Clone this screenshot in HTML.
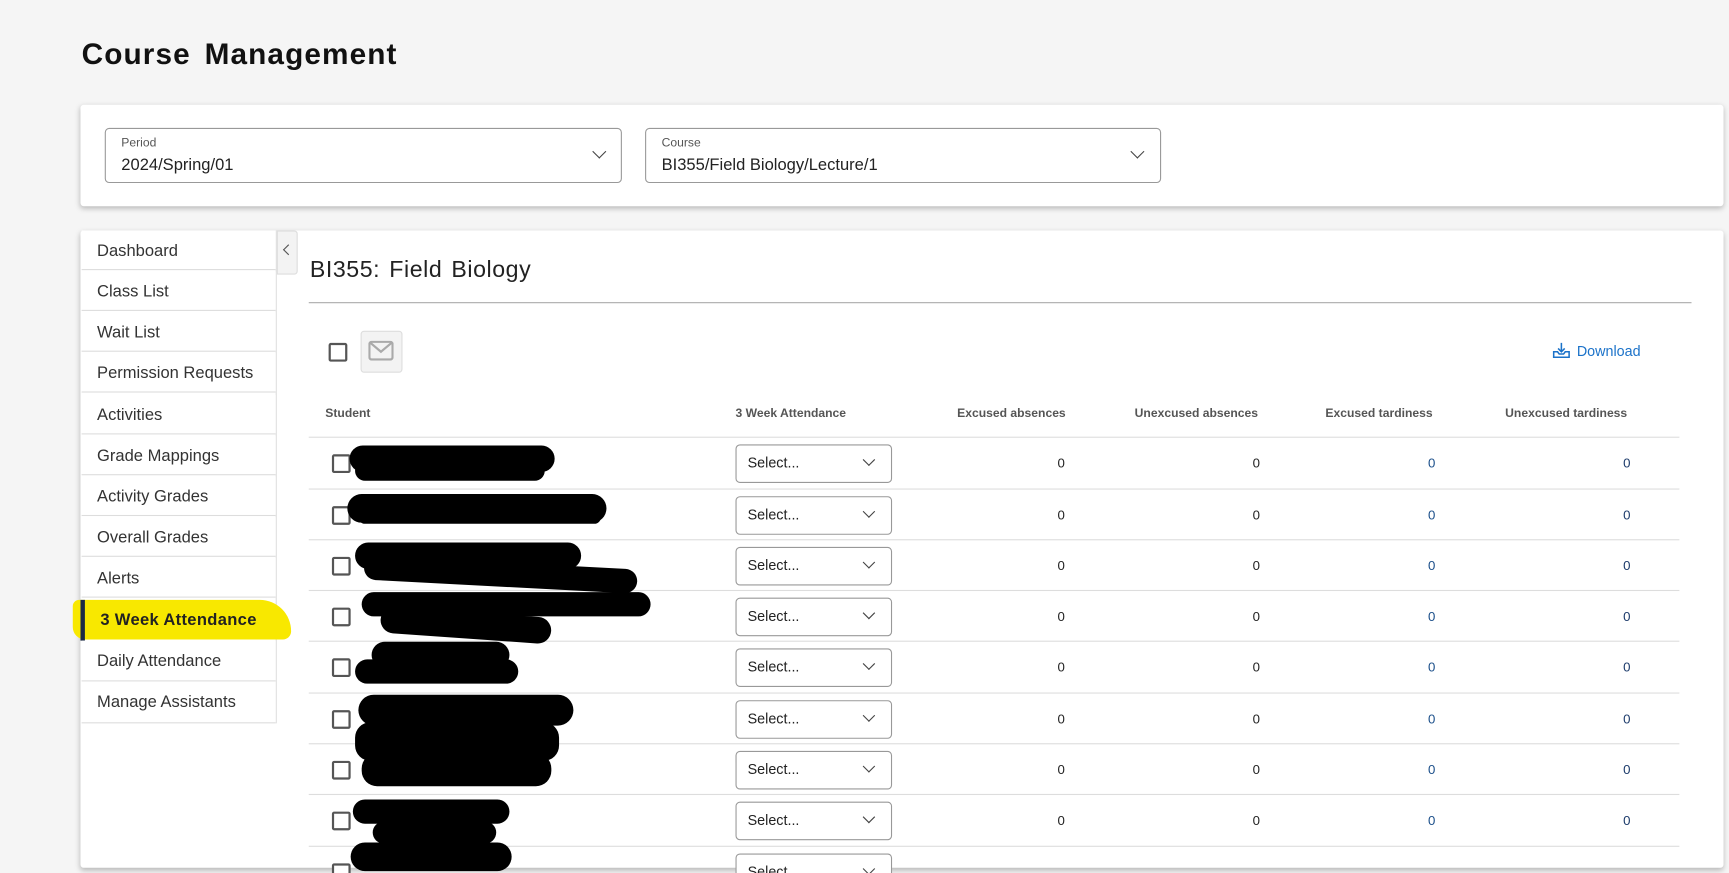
<!DOCTYPE html>
<html><head><meta charset="utf-8"><style>
html,body{margin:0;padding:0;width:1729px;height:873px;overflow:hidden;background:#f5f5f5}
#w{position:absolute;left:0;top:0;width:1568px;height:792px;transform:scale(1.10268);transform-origin:0 0;font-family:"Liberation Sans",sans-serif;color:#222;overflow:hidden}
.a{position:absolute}
h1{position:absolute;left:74px;top:34px;margin:0;font-size:27px;font-weight:bold;color:#111;letter-spacing:1px;word-spacing:4px}
.card{position:absolute;background:#fff;box-shadow:0 2px 5px rgba(0,0,0,.25);border-radius:3px}
.sel{position:absolute;border:1px solid #999;border-radius:4px;background:#fff}
.sel .l{position:absolute;left:14px;top:7px;font-size:11px;color:#555}
.sel .v{position:absolute;left:14px;top:24px;font-size:15px;color:#222}
.chev{position:absolute;width:8px;height:8px;border-right:1.5px solid #444;border-bottom:1.5px solid #444;transform:rotate(45deg)}
.nav{position:absolute;left:74px;width:176px;height:36px;border-bottom:1px solid #ddd;background:#fff;font-size:15px;color:#333;line-height:38px;padding-left:14px;box-sizing:border-box}
.cb{position:absolute;width:13px;height:13px;border:2px solid #555;border-radius:2px;background:#fff}
.th{position:absolute;top:369px;font-size:11px;font-weight:bold;color:#555}
.hl{position:absolute;left:280px;width:1243px;height:1px;background:#ddd}
.dd{position:absolute;left:667px;width:140px;height:33px;border:1px solid #999;border-radius:4px;background:#fff;font-size:13px}
.dd span{position:absolute;left:10px;top:8px}
.z{position:absolute;font-size:12px;color:#222}
.blk{position:absolute;background:#000;border-radius:14px}
</style></head><body><div id="w">
<h1>Course Management</h1>
<div class="card" style="left:73px;top:95px;width:1490px;height:92px">
</div>
<div class="sel" style="left:95px;top:116px;width:467px;height:48px"><div class="l">Period</div><div class="v">2024/Spring/01</div><div class="chev" style="left:443px;top:16px"></div></div>
<div class="sel" style="left:585px;top:116px;width:466px;height:48px"><div class="l">Course</div><div class="v">BI355/Field Biology/Lecture/1</div><div class="chev" style="left:441px;top:16px"></div></div>

<div class="card" style="left:73px;top:209px;width:1490px;height:578px"></div>
<div class="a" style="left:250px;top:209px;width:1px;height:447px;background:#ddd"></div>
<div class="a" style="left:251px;top:209px;width:17px;height:38px;background:#f3f3f3;border:1px solid #ddd;border-radius:0 3px 3px 0"></div>
<div class="a" style="left:258px;top:223px;width:6px;height:6px;border-left:1.3px solid #555;border-bottom:1.3px solid #555;transform:rotate(45deg)"></div>

<div class="nav" style="top:209px">Dashboard</div>
<div class="nav" style="top:246px">Class List</div>
<div class="nav" style="top:283px">Wait List</div>
<div class="nav" style="top:320px">Permission Requests</div>
<div class="nav" style="top:358px">Activities</div>
<div class="nav" style="top:395px">Grade Mappings</div>
<div class="nav" style="top:432px">Activity Grades</div>
<div class="nav" style="top:469px">Overall Grades</div>
<div class="nav" style="top:506px">Alerts</div>
<div class="a" style="left:66px;top:544px;width:198px;height:36px;background:#f8e800;border-radius:6px 30px 8px 12px"></div>
<div class="a" style="left:73px;top:544px;width:4px;height:37px;background:#1c2a44"></div>
<div class="a" style="left:91px;top:554px;font-size:15px;font-weight:bold;color:#222;letter-spacing:.3px">3 Week Attendance</div>
<div class="nav" style="top:581px;height:37px">Daily Attendance</div>
<div class="nav" style="top:618px;height:38px">Manage Assistants</div>

<div class="a" style="left:281px;top:233px;font-size:21px;color:#222;letter-spacing:.5px;word-spacing:2px">BI355: Field Biology</div>
<div class="a" style="left:280px;top:274px;width:1254px;height:1px;background:#aaa"></div>
<div class="cb" style="left:298px;top:311px"></div>
<div class="a" style="left:327px;top:300px;width:36px;height:36px;background:#f3f3f3;border:1px solid #ddd;border-radius:3px"></div>
<svg class="a" style="left:334px;top:309px" width="23" height="18" viewBox="0 0 23 18"><rect x="1" y="1" width="21" height="16" rx="2" fill="none" stroke="#aaa" stroke-width="2"/><path d="M2 2 L11.5 10 L21 2" fill="none" stroke="#aaa" stroke-width="2"/></svg>
<svg class="a" style="left:1408px;top:310px" width="16" height="15" viewBox="0 0 16 15"><path d="M8 1v8M5 6l3 3 3-3M1 9v5h14V9h-3.5l-1.5 2H6L4.5 9z" fill="none" stroke="#1b72c9" stroke-width="1.4"/></svg>
<div class="a" style="left:1430px;top:311px;font-size:13px;color:#1b72c9">Download</div>

<div class="th" style="left:295px">Student</div>
<div class="th" style="left:667px">3 Week Attendance</div>
<div class="th" style="left:868px">Excused absences</div>
<div class="th" style="left:1029px">Unexcused absences</div>
<div class="th" style="left:1202px">Excused tardiness</div>
<div class="th" style="left:1365px">Unexcused tardiness</div>

<div id="rows"></div>
<script>
var tops=[396,443,489,535,581,628,674,720,767],h='';
tops.forEach(function(t,i){
h+='<div class="hl" style="top:'+t+'px"></div>';
var c=t+24;
h+='<div class="cb" style="left:301px;top:'+(c-8)+'px"></div>';
h+='<div class="dd" style="top:'+(c-17)+'px"><span>Select...</span><div class="chev" style="left:116px;top:9px;width:7px;height:7px;border-width:1.3px"></div></div>';
if(i<8){[[959,'#222'],[1136,'#222'],[1295,'#1b4f8a'],[1472,'#1b3a6a']].forEach(function(z){h+='<div class="z" style="left:'+z[0]+'px;top:'+(c-7)+'px;color:'+z[1]+'">0</div>'});}
});
document.getElementById('rows').innerHTML=h;
</script>
<div class="blk" style="left:317px;top:404px;width:186px;height:24px"></div>
<div class="blk" style="left:322px;top:418px;width:172px;height:18px"></div>
<div class="blk" style="left:315px;top:448px;width:235px;height:26px"></div>
<div class="blk" style="left:325px;top:463px;width:220px;height:12px"></div>
<div class="blk" style="left:322px;top:492px;width:205px;height:24px"></div>
<div class="blk" style="left:330px;top:510px;width:248px;height:22px;transform:rotate(3deg)"></div>
<div class="blk" style="left:328px;top:537px;width:262px;height:22px"></div>
<div class="blk" style="left:345px;top:555px;width:155px;height:24px;transform:rotate(4deg)"></div>
<div class="blk" style="left:337px;top:582px;width:125px;height:24px"></div>
<div class="blk" style="left:322px;top:598px;width:148px;height:22px"></div>
<div class="blk" style="left:325px;top:630px;width:195px;height:28px"></div>
<div class="blk" style="left:322px;top:655px;width:185px;height:35px"></div>
<div class="blk" style="left:328px;top:683px;width:172px;height:30px"></div>
<div class="blk" style="left:320px;top:725px;width:142px;height:22px"></div>
<div class="blk" style="left:338px;top:745px;width:112px;height:20px"></div>
<div class="blk" style="left:318px;top:764px;width:146px;height:26px"></div>
</div></body></html>
